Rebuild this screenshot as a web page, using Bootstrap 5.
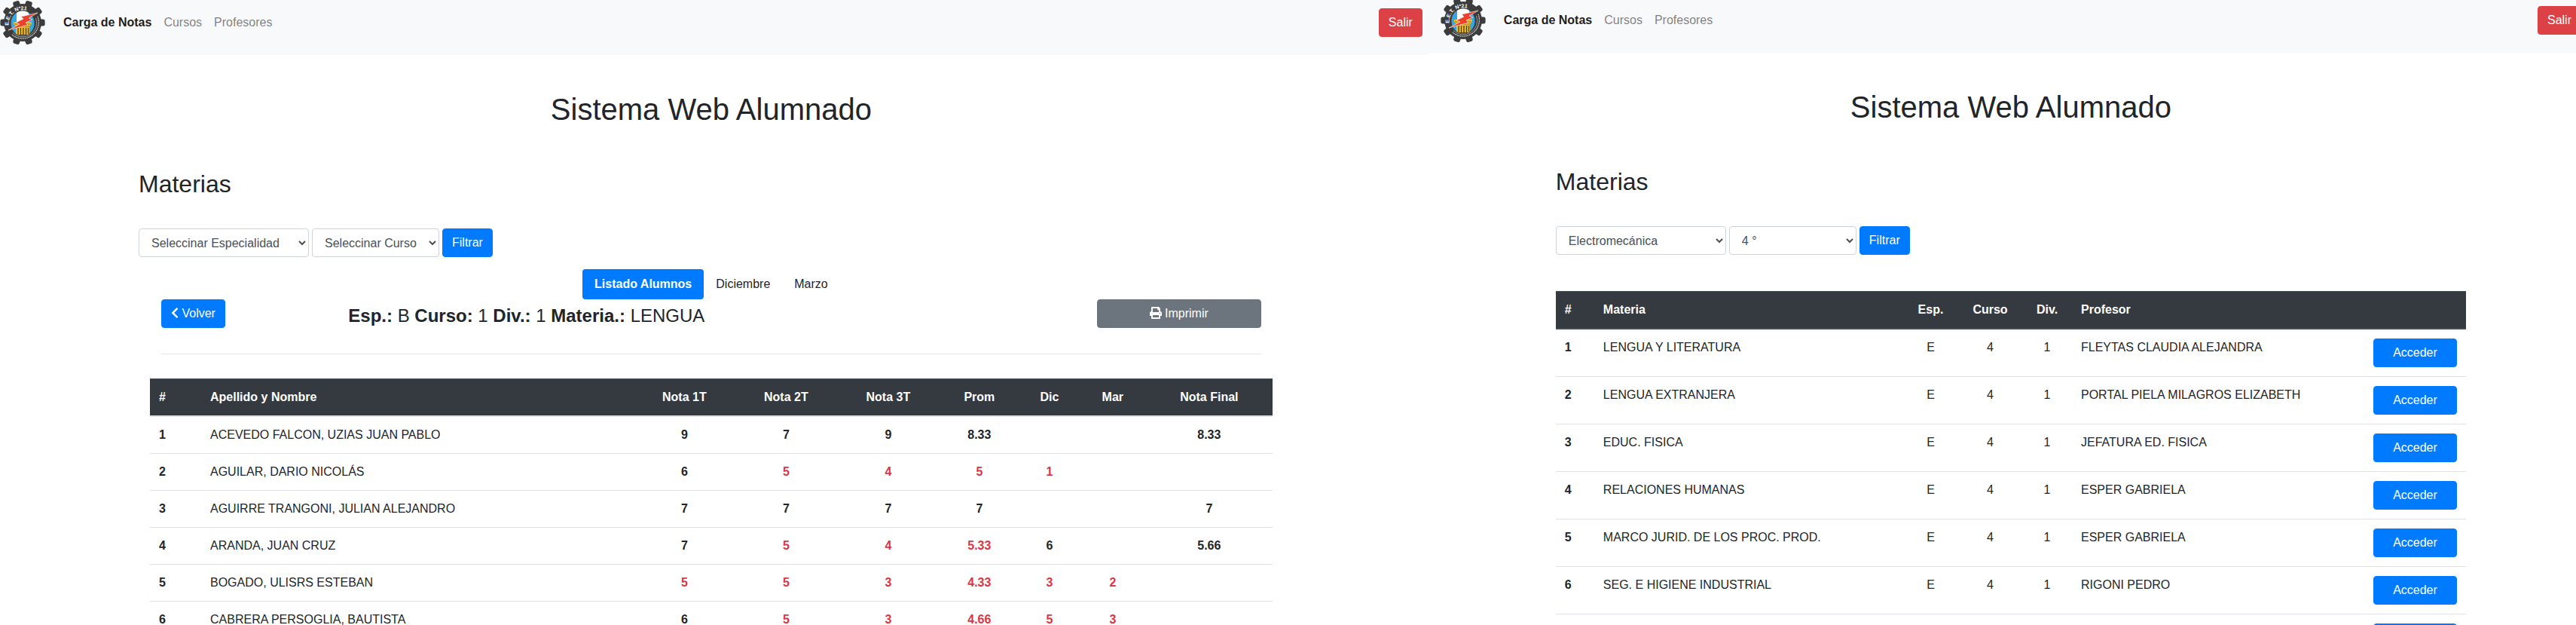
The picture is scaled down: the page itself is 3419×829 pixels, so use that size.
<!DOCTYPE html>
<html lang="es">
<head>
<meta charset="utf-8">
<meta name="viewport" content="width=device-width, initial-scale=1">
<title>Sistema Web Alumnado</title>
<link href="https://cdn.jsdelivr.net/npm/bootstrap@5.3.0/dist/css/bootstrap.min.css" rel="stylesheet">
<style>
  body { font-family: "Liberation Sans", Arial, sans-serif; font-size: 16px; line-height: 24px; color: #212529; background: #fff; }
  .screens { height: 100vh; overflow: hidden; }
  .screen { overflow: hidden; min-width: 0; }
  .screen-grades { flex: 0 0 55.45%; }
  .screen-subjects { flex: 1 1 0; }
  .screen-subjects > header { margin-top: -3px; }
  .screen-subjects .btn-exit { margin-right: -7px; }
  .screen-grades .topbar { padding-right: 8px; }
  .screen-subjects .topbar { padding-left: 16px; }
  .topbar { background: #f8f9fa; padding: 0 0 13px; }
  .topbar .nav-link { color: rgba(0,0,0,.5); padding: 8px; }
  .topbar .nav-link.active { color: rgba(0,0,0,.9); font-weight: 700; }
  .brand-logo { width: 60px; height: 60px; margin-right: 16px; }
  .screen-grades main { padding: 48px 192px 0 184px; }
  .screen-subjects main { padding: 48px 146px 0 169px; }
  .screen h1 { font-size: 40px; line-height: 48px; font-weight: 400; margin: 0 0 56px; }
  .screen h2 { font-size: 32px; line-height: 38px; font-weight: 400; margin: 0 0 40px; }
  .course-title { font-size: 24px; line-height: 28px; font-weight: 400; margin: 0; padding: 8px 0; }
  .btn { --bs-btn-border-radius: 4px; --bs-btn-line-height: 24px; --bs-btn-font-size: 16px; box-shadow: none; }
  .btn-primary { --bs-btn-bg: #007bff; --bs-btn-border-color: #007bff; }
  .btn-secondary { --bs-btn-bg: #6c757d; --bs-btn-border-color: #6c757d; }
  .btn-exit { --bs-btn-bg: #dc4146; --bs-btn-border-color: #dc4146; }
  .filters { gap: 4px; }
  .filters .form-select { appearance: auto; background: #fff; border: 1px solid #ced4da; border-radius: 4px; color: #495057; padding: 6px 12px; height: 38px; font-size: 16px; }
  .filters .pick-area { width: 226px; }
  .filters .pick-year { width: 169px; }
  .tabs { margin-top: 16px; }
  .tabs .nav-link { color: #212529; padding: 8px 16px; border-radius: 4px; }
  .tabs .nav-link.active { background: #007bff; color: #fff; font-weight: 700; }
  .sheet { padding: 0 15px; }
  .sheet .row { --bs-gutter-x: 30px; margin: 0; }
  .sheet hr { margin: 28px 15px 32px; border-top: 1px solid #000; opacity: .1; }
  .fa-glyph { height: 16px; vertical-align: -2px; fill: currentColor; }
  .grid-table { table-layout: fixed; border-collapse: separate; border-spacing: 0; color: #212529; margin: 0; --bs-table-bg: transparent; }
  .grid-table > :not(caption) > * > * { padding: 12px; border: 0 solid #dee2e6; border-bottom-width: 1px; color: inherit; }
  .grid-table > thead > tr > th { background: #343a40; color: #fff; border-top: 1px solid #454d55; border-bottom: 2px solid #dee2e6; }
  .grid-table.subjects > thead > tr > th { border-bottom-color: #454d55; }
  .grades td { text-align: center; font-weight: 700; }
  .grid-table td.person { text-align: left; font-weight: 400; }
  .grid-table.grades > tbody > tr > td.low { color: #dc3545; }
  .subjects { margin-top: 48px; }
  .w51 { width: 51px; } .w66 { width: 66px; } .w68 { width: 68px; } .w73 { width: 73px; } .w80 { width: 80px; }
  .w85 { width: 85px; } .w88 { width: 88px; } .w106 { width: 106px; } .w135 { width: 135px; }
  .w136 { width: 136px; } .w168 { width: 168px; } .w388 { width: 388px; }
</style>
</head>
<body>
<svg width="0" height="0" class="position-absolute" aria-hidden="true">
  <defs>
    <path id="tooth" d="M25 24.500 L25.500 3 Q25.500 .4 27.500 .4 H32.500 Q34.500 .4 34.500 3 L35 24.500Z"/>
    <path id="letterArc" d="M12.500 37.500 A18.500 18.500 0 1 1 48.500 33"/>
    <clipPath id="shield"><ellipse cx="30" cy="31" rx="15.500" ry="16.500"/></clipPath>
    <symbol id="school" viewBox="0 0 60 60">
      <g fill="#3c3c3c">
        <circle cx="30" cy="30" r="25"/>
        <use href="#tooth" transform="rotate(18 30 30)"/><use href="#tooth" transform="rotate(54 30 30)"/>
        <use href="#tooth" transform="rotate(90 30 30)"/><use href="#tooth" transform="rotate(126 30 30)"/>
        <use href="#tooth" transform="rotate(162 30 30)"/><use href="#tooth" transform="rotate(198 30 30)"/>
        <use href="#tooth" transform="rotate(234 30 30)"/><use href="#tooth" transform="rotate(270 30 30)"/>
        <use href="#tooth" transform="rotate(306 30 30)"/><use href="#tooth" transform="rotate(342 30 30)"/>
      </g>
      <g clip-path="url(#shield)">
        <rect x="13" y="13" width="34" height="36" fill="#35a7e0"/>
        <rect x="22" y="13" width="16" height="20" fill="#fff"/>
        <path d="M18 29H42V32L39 35V49H21V35L18 32Z" fill="#e9b92b"/>
        <path d="M19 32H41M21 35H39" stroke="#8d6a10" stroke-width=".7"/>
        <path d="M24 37V46M27.500 37V46M31 37V46M34.500 37V46M37.500 37V45" stroke="#4a3a12" stroke-width="1.200"/>
        <path d="M14 46H46V50H14Z" fill="#3c3c3c"/>
      </g>
      <path d="M50 22 A21.500 21.500 0 0 1 16 46" fill="none" stroke="#ddd" stroke-width="1.200" stroke-dasharray="1.500 .8"/>
      <path d="M47.500 24 A18.500 18.500 0 0 1 17 43.500" fill="none" stroke="#bbb" stroke-width=".7"/>
      <path d="M50 17L28 22L31 25L21 30L26 32L11 40L37 33L34 30L43 26L38 24Z" fill="#ee4029" stroke="#fff" stroke-width=".6"/>
      <text font-family="Liberation Sans, sans-serif" font-size="7" font-weight="700" fill="#fff"><textPath href="#letterArc" startOffset="4">E.E.T. Nº21</textPath></text>
    </symbol>
  </defs>
</svg>

<div class="screens d-flex align-items-start">
  <section class="screen screen-grades">
    <header class="topbar d-flex align-items-center">
      <a href="#" aria-label="Inicio" class="d-flex"><svg class="brand-logo"><use href="#school"/></svg></a>
      <nav class="nav me-auto">
        <a class="nav-link active" href="#">Carga de Notas</a>
        <a class="nav-link" href="#">Cursos</a>
        <a class="nav-link" href="#">Profesores</a>
      </nav>
      <button type="button" class="btn btn-danger btn-exit">Salir</button>
    </header>
    <main>
      <h1 class="text-center">Sistema Web Alumnado</h1>
      <h2>Materias</h2>
      <form class="filters d-flex">
        <select class="form-select pick-area" aria-label="Especialidad"><option>Seleccinar Especialidad</option></select>
        <select class="form-select pick-year" aria-label="Curso"><option>Seleccinar Curso</option></select>
        <button type="button" class="btn btn-primary">Filtrar</button>
      </form>
      <nav class="nav nav-pills tabs justify-content-center">
        <a class="nav-link active" href="#">Listado Alumnos</a>
        <a class="nav-link" href="#">Diciembre</a>
        <a class="nav-link" href="#">Marzo</a>
      </nav>
      <div class="sheet">
        <div class="row">
          <div class="col-2"><button type="button" class="btn btn-primary"><svg class="fa-glyph" viewBox="0 0 320 512" width="10"><path d="M34.520 239.030L228.870 44.690c9.370-9.370 24.570-9.370 33.940 0l22.670 22.670c9.360 9.360 9.370 24.520.04 33.900L131.490 256l154.020 154.750c9.340 9.380 9.320 24.540-.04 33.900l-22.670 22.670c-9.370 9.370-24.570 9.370-33.940 0L34.520 272.970c-9.370-9.370-9.370-24.570 0-33.940z"/></svg> Volver</button></div>
          <div class="col-8"><h3 class="course-title"><strong>Esp.:</strong> B <strong>Curso:</strong> 1 <strong>Div.:</strong> 1 <strong>Materia.:</strong> LENGUA</h3></div>
          <div class="col-2"><button type="button" class="btn btn-secondary w-100"><svg class="fa-glyph" viewBox="0 0 512 512" width="16"><path d="M448 192V77.250c0-8.490-3.370-16.620-9.370-22.630L393.370 9.370c-6-6-14.140-9.370-22.630-9.370H96C78.330 0 64 14.330 64 32v160c-35.350 0-64 28.650-64 64v112c0 8.840 7.160 16 16 16h48v96c0 17.670 14.330 32 32 32h320c17.670 0 32-14.330 32-32v-96h48c8.840 0 16-7.160 16-16V256c0-35.350-28.650-64-64-64zm-64 256H128v-96h256v96zm0-224H128V64h192v48c0 8.840 7.160 16 16 16h48v96zm48 72c-13.250 0-24-10.750-24-24 0-13.260 10.750-24 24-24s24 10.740 24 24c0 13.250-10.750 24-24 24z"/></svg> Imprimir</button></div>
        </div>
        <hr>
        <table class="table grid-table grades">
          <colgroup><col class="w68"><col><col class="w135"><col class="w135"><col class="w136"><col class="w106"><col class="w80"><col class="w88"><col class="w168"></colgroup>
          <thead>
            <tr><th>#</th><th>Apellido y Nombre</th><th class="text-center">Nota 1T</th><th class="text-center">Nota 2T</th><th class="text-center">Nota 3T</th><th class="text-center">Prom</th><th class="text-center">Dic</th><th class="text-center">Mar</th><th class="text-center">Nota Final</th></tr>
          </thead>
          <tbody>
            <tr><th>1</th><td class="person">ACEVEDO FALCON, UZIAS JUAN PABLO</td><td>9</td><td>7</td><td>9</td><td>8.33</td><td></td><td></td><td>8.33</td></tr>
            <tr><th>2</th><td class="person">AGUILAR, DARIO NICOLÁS</td><td>6</td><td class="low">5</td><td class="low">4</td><td class="low">5</td><td class="low">1</td><td></td><td></td></tr>
            <tr><th>3</th><td class="person">AGUIRRE TRANGONI, JULIAN ALEJANDRO</td><td>7</td><td>7</td><td>7</td><td>7</td><td></td><td></td><td>7</td></tr>
            <tr><th>4</th><td class="person">ARANDA, JUAN CRUZ</td><td>7</td><td class="low">5</td><td class="low">4</td><td class="low">5.33</td><td>6</td><td></td><td>5.66</td></tr>
            <tr><th>5</th><td class="person">BOGADO, ULISRS ESTEBAN</td><td class="low">5</td><td class="low">5</td><td class="low">3</td><td class="low">4.33</td><td class="low">3</td><td class="low">2</td><td></td></tr>
            <tr><th>6</th><td class="person">CABRERA PERSOGLIA, BAUTISTA</td><td>6</td><td class="low">5</td><td class="low">3</td><td class="low">4.66</td><td class="low">5</td><td class="low">3</td><td></td></tr>
          </tbody>
        </table>
      </div>
    </main>
  </section>

  <section class="screen screen-subjects">
    <header class="topbar d-flex align-items-center">
      <a href="#" aria-label="Inicio" class="d-flex"><svg class="brand-logo"><use href="#school"/></svg></a>
      <nav class="nav me-auto">
        <a class="nav-link active" href="#">Carga de Notas</a>
        <a class="nav-link" href="#">Cursos</a>
        <a class="nav-link" href="#">Profesores</a>
      </nav>
      <button type="button" class="btn btn-danger btn-exit">Salir</button>
    </header>
    <main>
      <h1 class="text-center">Sistema Web Alumnado</h1>
      <h2>Materias</h2>
      <form class="filters d-flex">
        <select class="form-select pick-area" aria-label="Especialidad"><option>Electromecánica</option></select>
        <select class="form-select pick-year" aria-label="Curso"><option>4 °</option></select>
        <button type="button" class="btn btn-primary">Filtrar</button>
      </form>
      <table class="table grid-table subjects">
        <colgroup><col class="w51"><col><col class="w73"><col class="w85"><col class="w66"><col class="w388"><col class="w135"></colgroup>
        <thead>
          <tr><th>#</th><th>Materia</th><th class="text-center">Esp.</th><th class="text-center">Curso</th><th class="text-center">Div.</th><th>Profesor</th><th></th></tr>
        </thead>
        <tbody>
          <tr><th>1</th><td>LENGUA Y LITERATURA</td><td class="text-center">E</td><td class="text-center">4</td><td class="text-center">1</td><td>FLEYTAS CLAUDIA ALEJANDRA</td><td><button type="button" class="btn btn-primary w-100">Acceder</button></td></tr>
          <tr><th>2</th><td>LENGUA EXTRANJERA</td><td class="text-center">E</td><td class="text-center">4</td><td class="text-center">1</td><td>PORTAL PIELA MILAGROS ELIZABETH</td><td><button type="button" class="btn btn-primary w-100">Acceder</button></td></tr>
          <tr><th>3</th><td>EDUC. FISICA</td><td class="text-center">E</td><td class="text-center">4</td><td class="text-center">1</td><td>JEFATURA ED. FISICA</td><td><button type="button" class="btn btn-primary w-100">Acceder</button></td></tr>
          <tr><th>4</th><td>RELACIONES HUMANAS</td><td class="text-center">E</td><td class="text-center">4</td><td class="text-center">1</td><td>ESPER GABRIELA</td><td><button type="button" class="btn btn-primary w-100">Acceder</button></td></tr>
          <tr><th>5</th><td>MARCO JURID. DE LOS PROC. PROD.</td><td class="text-center">E</td><td class="text-center">4</td><td class="text-center">1</td><td>ESPER GABRIELA</td><td><button type="button" class="btn btn-primary w-100">Acceder</button></td></tr>
          <tr><th>6</th><td>SEG. E HIGIENE INDUSTRIAL</td><td class="text-center">E</td><td class="text-center">4</td><td class="text-center">1</td><td>RIGONI PEDRO</td><td><button type="button" class="btn btn-primary w-100">Acceder</button></td></tr>
          <tr><th></th><td></td><td></td><td></td><td></td><td></td><td><button type="button" class="btn btn-primary w-100 d-block" aria-label="Acceder">&nbsp;</button></td></tr>
        </tbody>
      </table>
    </main>
  </section>
</div>
<script src="https://cdn.jsdelivr.net/npm/bootstrap@5.3.0/dist/js/bootstrap.bundle.min.js"></script>
</body>
</html>
